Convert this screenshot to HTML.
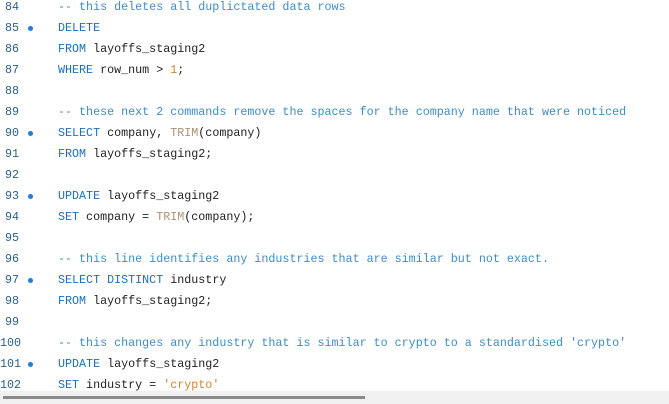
<!DOCTYPE html>
<html><head><style>
body{margin:0;width:669px;height:404px;background:#fff;overflow:hidden;position:relative;font-family:"Liberation Mono",monospace;font-size:11.7px;}
.l{position:absolute;left:0;height:21px;line-height:21px;white-space:pre;width:669px}
.n{position:absolute;left:5px;color:#2b5f8a}
.d{position:absolute;left:28px;top:8px;width:5px;height:5px;border-radius:50%;background:#1a7fe0}
.c{position:absolute;left:58px;color:#222}
.cm{color:#3d8dc8}
.k{color:#1b6fbf}
.f{color:#b09070}
.s{color:#d9822b}
.sb{position:absolute;left:0;top:391px;width:669px;height:13px;background:#f0f0f0}
.th{position:absolute;left:3px;top:396px;width:362px;height:3px;background:#8a8a8a}
</style></head><body>
<div class="l" style="top:-3px"><span class="n">84</span><span class="c cm">-- this deletes all duplictated data rows</span></div>
<div class="l" style="top:18px"><span class="n">85</span><span class="d"></span><span class="c"><span class="k">DELETE</span></span></div>
<div class="l" style="top:39px"><span class="n">86</span><span class="c"><span class="k">FROM</span> layoffs_staging2</span></div>
<div class="l" style="top:60px"><span class="n">87</span><span class="c"><span class="k">WHERE</span> row_num &gt; <span class="s">1</span>;</span></div>
<div class="l" style="top:81px"><span class="n">88</span></div>
<div class="l" style="top:102px"><span class="n">89</span><span class="c cm">-- these next 2 commands remove the spaces for the company name that were noticed</span></div>
<div class="l" style="top:123px"><span class="n">90</span><span class="d"></span><span class="c"><span class="k">SELECT</span> company, <span class="f">TRIM</span>(company)</span></div>
<div class="l" style="top:144px"><span class="n">91</span><span class="c"><span class="k">FROM</span> layoffs_staging2;</span></div>
<div class="l" style="top:165px"><span class="n">92</span></div>
<div class="l" style="top:186px"><span class="n">93</span><span class="d"></span><span class="c"><span class="k">UPDATE</span> layoffs_staging2</span></div>
<div class="l" style="top:207px"><span class="n">94</span><span class="c"><span class="k">SET</span> company = <span class="f">TRIM</span>(company);</span></div>
<div class="l" style="top:228px"><span class="n">95</span></div>
<div class="l" style="top:249px"><span class="n">96</span><span class="c cm">-- this line identifies any industries that are similar but not exact.</span></div>
<div class="l" style="top:270px"><span class="n">97</span><span class="d"></span><span class="c"><span class="k">SELECT DISTINCT</span> industry</span></div>
<div class="l" style="top:291px"><span class="n">98</span><span class="c"><span class="k">FROM</span> layoffs_staging2;</span></div>
<div class="l" style="top:312px"><span class="n">99</span></div>
<div class="l" style="top:333px"><span class="n" style="left:0">100</span><span class="c cm">-- this changes any industry that is similar to crypto to a standardised 'crypto'</span></div>
<div class="l" style="top:354px"><span class="n" style="left:0">101</span><span class="d"></span><span class="c"><span class="k">UPDATE</span> layoffs_staging2</span></div>
<div class="l" style="top:375px"><span class="n" style="left:0">102</span><span class="c"><span class="k">SET</span> industry = <span class="s">'crypto'</span></span></div>
<div class="sb"></div><div class="th"></div>
</body></html>
